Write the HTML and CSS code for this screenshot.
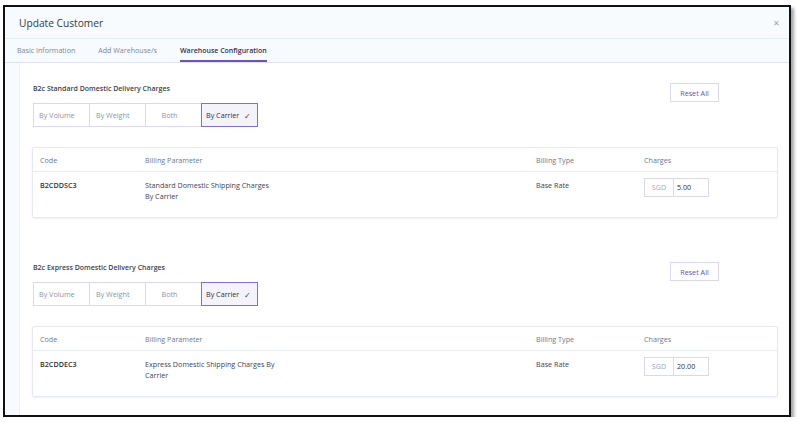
FILE: index.html
```html
<!DOCTYPE html>
<html>
<head>
<meta charset="utf-8">
<link rel="stylesheet" href="styles.css">
</head>
<body>
<div class="frame">
  <div class="modal-head">
    <div class="modal-title">Update Customer</div>
    <div class="close">&#x2715;</div>
  </div>
  <div class="tabs">
    <div class="tab">Basic Information</div>
    <div class="tab">Add Warehouse/s</div>
    <div class="tab active">Warehouse Configuration</div>
  </div>
  <div class="body">
    <div class="strip"></div>
    <div class="main">
      <div class="section">
        <div class="sec-head">
          <div>
            <div class="sec-title">B2c Standard Domestic Delivery Charges</div>
            <div class="seg">
              <div class="seg-btn">By Volume</div>
              <div class="seg-btn w2">By Weight</div>
              <div class="seg-btn center">Both</div>
              <div class="seg-btn sel">By Carrier <span class="chk">&#x2713;</span></div>
            </div>
          </div>
          <div class="reset">Reset All</div>
        </div>
        <div class="card">
          <div class="row head">
            <div>Code</div><div>Billing Parameter</div><div>Billing Type</div><div>Charges</div>
          </div>
          <div class="row data">
            <div class="code">B2CDDSC3</div>
            <div class="param">Standard Domestic Shipping Charges<br>By Carrier</div>
            <div>Base Rate</div>
            <div class="inp"><span class="cur">SGD</span><span class="val">5.00</span></div>
          </div>
        </div>
      </div>
      <div class="section second">
        <div class="sec-head">
          <div>
            <div class="sec-title">B2c Express Domestic Delivery Charges</div>
            <div class="seg">
              <div class="seg-btn">By Volume</div>
              <div class="seg-btn w2">By Weight</div>
              <div class="seg-btn center">Both</div>
              <div class="seg-btn sel">By Carrier <span class="chk">&#x2713;</span></div>
            </div>
          </div>
          <div class="reset">Reset All</div>
        </div>
        <div class="card">
          <div class="row head">
            <div>Code</div><div>Billing Parameter</div><div>Billing Type</div><div>Charges</div>
          </div>
          <div class="row data">
            <div class="code">B2CDDEC3</div>
            <div class="param">Express Domestic Shipping Charges By<br>Carrier</div>
            <div>Base Rate</div>
            <div class="inp"><span class="cur">SGD</span><span class="val">20.00</span></div>
          </div>
        </div>
      </div>
    </div>
  </div>
</div>
</body>
</html>
```
FILE: styles.css
```css
* { box-sizing: border-box; }
html, body { margin: 0; padding: 0; background: #ffffff; }
body {
  font-family: "Open Sans", "Noto Sans", sans-serif;
  color: #3a3f4b;
  padding: 5px 0 0 3px;
}
.frame {
  width: 788px;
  height: 412px;
  border: 2px solid #111;
  box-shadow: 3px 3px 3px rgba(0,0,0,0.35);
  display: flex;
  flex-direction: column;
  overflow: hidden;
  background: #fff;
}
.modal-head {
  height: 32px;
  background: #f7fbfe;
  border-bottom: 1px solid #e6edf4;
  display: flex;
  align-items: center;
  justify-content: space-between;
  padding: 0 9px 0 14px;
  flex: none;
}
.modal-title {
  font-size: 10.2px;
  font-weight: 500;
  color: #333a46;
}
.close {
  font-size: 8px;
  color: #a0a4ab;
}
.tabs {
  height: 24px;
  background: #f7fbfe;
  border-bottom: 1px solid #dfe2f1;
  display: flex;
  gap: 23px;
  padding-left: 12px;
  flex: none;
}
.tab {
  font-size: 7.1px;
  color: #7d8696;
  line-height: 23px;
  height: 23px;
}
.tab.active {
  color: #2e2f52;
  font-weight: 600;
  font-size: 7px;
  border-bottom: 2px solid #6b52c6;
}
.body {
  flex: 1;
  display: flex;
  min-height: 0;
}
.strip {
  width: 15px;
  background: #f7fbfe;
  border-right: 1px solid #eef2f7;
  flex: none;
}
.main {
  flex: 1;
  padding: 19px 9px 0 12px;
}
.section.second { margin-top: 43px; }
.sec-head {
  display: flex;
  justify-content: space-between;
  align-items: flex-start;
  padding-right: 61px;
}
.sec-title {
  font-size: 7px;
  font-weight: 600;
  color: #3a3f4b;
  line-height: 12px;
  margin-left: 1px;
  padding-top: 1px;
}
.seg {
  display: flex;
  margin-top: 8px;
  margin-left: 1px;
}
.seg-btn {
  width: 57px;
  height: 24px;
  border: 1px solid #ddd8f0;
  margin-right: -1px;
  font-size: 7.2px;
  color: #8c95a6;
  display: flex;
  align-items: center;
  padding-left: 5px;
  background: #fff;
}
.seg-btn.w2 { padding-left: 6px; }
.seg-btn.center { justify-content: center; padding-left: 0; padding-right: 8px; }
.seg-btn.sel {
  border-color: #8270cf;
  background: #f4f2fb;
  color: #2f3342;
  padding-left: 4px;
  position: relative;
  z-index: 1;
}
.chk { margin-left: 5px; color: #444; font-size: 8px; }
.reset {
  width: 49px;
  height: 19px;
  border: 1px solid #ddd8f0;
  font-size: 7.2px;
  color: #6a50c0;
  display: flex;
  align-items: center;
  justify-content: center;
  margin-top: 1px;
}
.card {
  margin-top: 20px;
  border: 1px solid #e6e9f1;
  box-shadow: 0 1px 2px rgba(60,70,110,0.08);
  border-radius: 2px;
  width: 746px;
}
.row {
  display: grid;
  grid-template-columns: 105px 391px 108px 1fr;
  font-size: 7.2px;
}
.row > div { padding-left: 7px; }
.row.head {
  height: 24px;
  align-items: center;
  color: #6d7a90;
  border-bottom: 1px solid #e9ecf3;
}
.row.data {
  height: 45px;
  padding-top: 8px;
  color: #3f4452;
  line-height: 11px;
}
.code { font-weight: 600; color: #333; }
.inp {
  display: flex;
  height: 19px;
  margin-top: -2px;
  margin-left: 7px;
  padding-left: 0 !important;
  width: 65px;
  border: 1px solid #dcd8ee;
}
.cur {
  width: 29px;
  border-right: 1px solid #dcd8ee;
  color: #a1a7b3;
  display: flex;
  align-items: center;
  justify-content: center;
}
.val {
  display: flex;
  align-items: center;
  padding-left: 3px;
  color: #333;
}
```
